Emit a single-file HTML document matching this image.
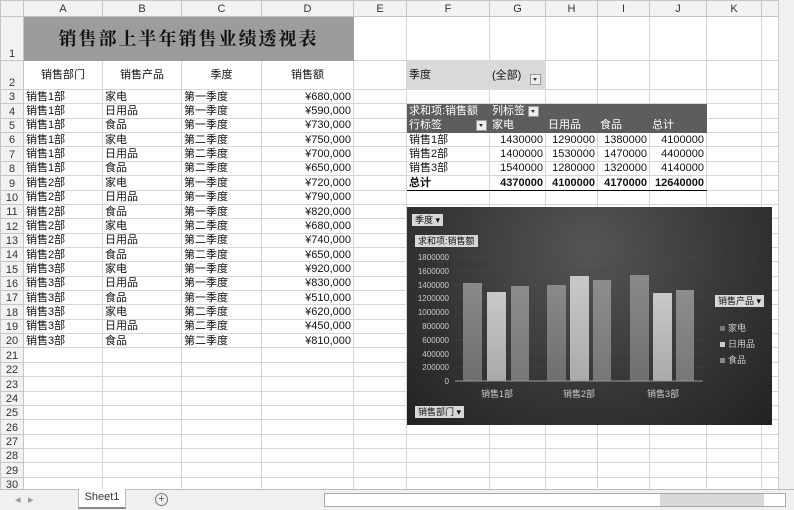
<!DOCTYPE html>
<html><head><meta charset="utf-8"><style>
body{margin:0;width:794px;height:509px;overflow:hidden;background:#fff;font-family:"Liberation Sans","Noto Sans CJK SC",sans-serif;font-size:11px;color:#111;position:relative}
table{border-collapse:collapse;table-layout:fixed;position:absolute;left:0;top:0}
tr{height:14.37px}
td{border:1px solid #d6d6d6;padding:0 2px;white-space:nowrap;overflow:hidden;line-height:12px}
tr.h td{background:#f2f2f2;color:#333;text-align:center;height:15px;border-color:#c6c6c6}
td.r{background:#f2f2f2;color:#333;text-align:center;border-color:#c6c6c6;font-size:11px;padding:0;vertical-align:bottom}
.n{text-align:right}
.dk{background:#5d5d5d;color:#fff;border-color:#5d5d5d}
.tot td.p{font-weight:bold;border-top:1px solid #000;border-bottom:1.5px solid #000}
.dd{display:inline-block;width:9px;height:9px;background:#eee;border:1px solid #999;vertical-align:middle;position:relative}
.dd:after{content:"";position:absolute;left:2px;top:3px;border:2.5px solid transparent;border-top:3px solid #333}
.chart{position:absolute;left:407px;top:207px;width:365px;height:218px;background:radial-gradient(ellipse at 50% 20%,#555 0%,#3a3a3a 50%,#222 100%)}
.btn{position:absolute;background:#d8d8d8;color:#111;font-size:9px;padding:0 3px;height:12px;line-height:12px}
</style></head><body>
<table>
<colgroup><col style="width:23px"><col style="width:79px"><col style="width:79px"><col style="width:80px"><col style="width:92px"><col style="width:53px"><col style="width:83px"><col style="width:56px"><col style="width:52px"><col style="width:52px"><col style="width:57px"><col style="width:55px"><col style="width:17px"></colgroup>
<tr class="h" style="height:16px"><td></td><td>A</td><td>B</td><td>C</td><td>D</td><td>E</td><td>F</td><td>G</td><td>H</td><td>I</td><td>J</td><td>K</td><td></td></tr>
<tr style="height:44px"><td class="r">1</td><td colspan="4" style="background:#9c9c9c;text-align:center;font-family:'Noto Serif CJK SC',serif;font-weight:bold;font-size:18px;letter-spacing:2px;line-height:43px;border-color:#9c9c9c">销售部上半年销售业绩透视表</td><td></td><td></td><td></td><td></td><td></td><td></td><td></td><td></td></tr>
<tr style="height:29px"><td class="r">2</td><td style="text-align:center">销售部门</td><td style="text-align:center">销售产品</td><td style="text-align:center">季度</td><td style="text-align:center">销售额</td><td></td><td style="background:#d9d9d9;border-color:#d9d9d9">季度</td><td style="background:#d9d9d9;border-color:#d9d9d9">(全部) <span class="dd" style="margin-left:6px;margin-top:8px"></span></td><td></td><td></td><td></td><td></td><td></td></tr>
<tr><td class="r">3</td><td>销售1部</td><td>家电</td><td>第一季度</td><td class="n">¥680,000</td><td></td><td></td><td></td><td></td><td></td><td></td><td></td><td></td></tr>
<tr><td class="r">4</td><td>销售1部</td><td>日用品</td><td>第一季度</td><td class="n">¥590,000</td><td></td><td class="dk">求和项:销售额</td><td class="dk">列标签 <span class="dd"></span></td><td class="dk"></td><td class="dk"></td><td class="dk"></td><td></td><td></td></tr>
<tr><td class="r">5</td><td>销售1部</td><td>食品</td><td>第一季度</td><td class="n">¥730,000</td><td></td><td class="dk">行标签<span class="dd" style="float:right;margin-top:1px"></span></td><td class="dk">家电</td><td class="dk">日用品</td><td class="dk">食品</td><td class="dk">总计</td><td></td><td></td></tr>
<tr><td class="r">6</td><td>销售1部</td><td>家电</td><td>第二季度</td><td class="n">¥750,000</td><td></td><td>销售1部</td><td class="n">1430000</td><td class="n">1290000</td><td class="n">1380000</td><td class="n">4100000</td><td></td><td></td></tr>
<tr><td class="r">7</td><td>销售1部</td><td>日用品</td><td>第二季度</td><td class="n">¥700,000</td><td></td><td>销售2部</td><td class="n">1400000</td><td class="n">1530000</td><td class="n">1470000</td><td class="n">4400000</td><td></td><td></td></tr>
<tr><td class="r">8</td><td>销售1部</td><td>食品</td><td>第二季度</td><td class="n">¥650,000</td><td></td><td>销售3部</td><td class="n">1540000</td><td class="n">1280000</td><td class="n">1320000</td><td class="n">4140000</td><td></td><td></td></tr>
<tr class="tot"><td class="r">9</td><td>销售2部</td><td>家电</td><td>第一季度</td><td class="n">¥720,000</td><td></td><td class="p">总计</td><td class="n p">4370000</td><td class="n p">4100000</td><td class="n p">4170000</td><td class="n p">12640000</td><td></td><td></td></tr>
<tr><td class="r">10</td><td>销售2部</td><td>日用品</td><td>第一季度</td><td class="n">¥790,000</td><td></td><td></td><td></td><td></td><td></td><td></td><td></td><td></td></tr>
<tr><td class="r">11</td><td>销售2部</td><td>食品</td><td>第一季度</td><td class="n">¥820,000</td><td></td><td></td><td></td><td></td><td></td><td></td><td></td><td></td></tr>
<tr><td class="r">12</td><td>销售2部</td><td>家电</td><td>第二季度</td><td class="n">¥680,000</td><td></td><td></td><td></td><td></td><td></td><td></td><td></td><td></td></tr>
<tr><td class="r">13</td><td>销售2部</td><td>日用品</td><td>第二季度</td><td class="n">¥740,000</td><td></td><td></td><td></td><td></td><td></td><td></td><td></td><td></td></tr>
<tr><td class="r">14</td><td>销售2部</td><td>食品</td><td>第二季度</td><td class="n">¥650,000</td><td></td><td></td><td></td><td></td><td></td><td></td><td></td><td></td></tr>
<tr><td class="r">15</td><td>销售3部</td><td>家电</td><td>第一季度</td><td class="n">¥920,000</td><td></td><td></td><td></td><td></td><td></td><td></td><td></td><td></td></tr>
<tr><td class="r">16</td><td>销售3部</td><td>日用品</td><td>第一季度</td><td class="n">¥830,000</td><td></td><td></td><td></td><td></td><td></td><td></td><td></td><td></td></tr>
<tr><td class="r">17</td><td>销售3部</td><td>食品</td><td>第一季度</td><td class="n">¥510,000</td><td></td><td></td><td></td><td></td><td></td><td></td><td></td><td></td></tr>
<tr><td class="r">18</td><td>销售3部</td><td>家电</td><td>第二季度</td><td class="n">¥620,000</td><td></td><td></td><td></td><td></td><td></td><td></td><td></td><td></td></tr>
<tr><td class="r">19</td><td>销售3部</td><td>日用品</td><td>第二季度</td><td class="n">¥450,000</td><td></td><td></td><td></td><td></td><td></td><td></td><td></td><td></td></tr>
<tr><td class="r">20</td><td>销售3部</td><td>食品</td><td>第二季度</td><td class="n">¥810,000</td><td></td><td></td><td></td><td></td><td></td><td></td><td></td><td></td></tr>
<tr><td class="r">21</td><td></td><td></td><td></td><td></td><td></td><td></td><td></td><td></td><td></td><td></td><td></td><td></td></tr>
<tr><td class="r">22</td><td></td><td></td><td></td><td></td><td></td><td></td><td></td><td></td><td></td><td></td><td></td><td></td></tr>
<tr><td class="r">23</td><td></td><td></td><td></td><td></td><td></td><td></td><td></td><td></td><td></td><td></td><td></td><td></td></tr>
<tr><td class="r">24</td><td></td><td></td><td></td><td></td><td></td><td></td><td></td><td></td><td></td><td></td><td></td><td></td></tr>
<tr><td class="r">25</td><td></td><td></td><td></td><td></td><td></td><td></td><td></td><td></td><td></td><td></td><td></td><td></td></tr>
<tr><td class="r">26</td><td></td><td></td><td></td><td></td><td></td><td></td><td></td><td></td><td></td><td></td><td></td><td></td></tr>
<tr><td class="r">27</td><td></td><td></td><td></td><td></td><td></td><td></td><td></td><td></td><td></td><td></td><td></td><td></td></tr>
<tr><td class="r">28</td><td></td><td></td><td></td><td></td><td></td><td></td><td></td><td></td><td></td><td></td><td></td><td></td></tr>
<tr><td class="r">29</td><td></td><td></td><td></td><td></td><td></td><td></td><td></td><td></td><td></td><td></td><td></td><td></td></tr>
<tr><td class="r">30</td><td></td><td></td><td></td><td></td><td></td><td></td><td></td><td></td><td></td><td></td><td></td><td></td></tr>
</table>

<div class="chart">
<svg width="365" height="218" style="position:absolute;left:0;top:0" font-family="Liberation Sans,Noto Sans CJK SC,sans-serif" font-size="8" fill="#ccc">
<defs>
<linearGradient id="a" x1="0" y1="0" x2="0" y2="1"><stop offset="0" stop-color="#8a8a8a"/><stop offset="1" stop-color="#6e6e6e"/></linearGradient>
<linearGradient id="b" x1="0" y1="0" x2="0" y2="1"><stop offset="0" stop-color="#c8c8c8"/><stop offset="1" stop-color="#aaa"/></linearGradient>
<linearGradient id="c" x1="0" y1="0" x2="0" y2="1"><stop offset="0" stop-color="#8d8d8d"/><stop offset="1" stop-color="#777"/></linearGradient>
</defs>
<g stroke="#4a4a4a" stroke-width="0.6">
<line x1="48" x2="296" y1="50" y2="50"/><line x1="48" x2="296" y1="64" y2="64"/><line x1="48" x2="296" y1="78" y2="78"/><line x1="48" x2="296" y1="91" y2="91"/><line x1="48" x2="296" y1="105" y2="105"/><line x1="48" x2="296" y1="119" y2="119"/><line x1="48" x2="296" y1="133" y2="133"/><line x1="48" x2="296" y1="147" y2="147"/><line x1="48" x2="296" y1="160" y2="160"/>
</g>
<g text-anchor="end"><text x="42" y="53">1800000</text><text x="42" y="67">1600000</text><text x="42" y="81">1400000</text><text x="42" y="94">1200000</text><text x="42" y="108">1000000</text><text x="42" y="122">800000</text><text x="42" y="136">600000</text><text x="42" y="150">400000</text><text x="42" y="163">200000</text><text x="42" y="177">0</text></g>
<rect x="56" y="76" width="19" height="98" fill="url(#a)"/><rect x="80" y="85" width="19" height="89" fill="url(#b)"/><rect x="104" y="79" width="18" height="95" fill="url(#c)"/>
<rect x="140" y="78" width="19" height="96" fill="url(#a)"/><rect x="163" y="69" width="19" height="105" fill="url(#b)"/><rect x="186" y="73" width="18" height="101" fill="url(#c)"/>
<rect x="223" y="68" width="19" height="106" fill="url(#a)"/><rect x="246" y="86" width="19" height="88" fill="url(#b)"/><rect x="269" y="83" width="18" height="91" fill="url(#c)"/>
<line x1="48" x2="296" y1="174" y2="174" stroke="#999"/>
<g text-anchor="middle" font-size="9"><text x="90" y="190">销售1部</text><text x="172" y="190">销售2部</text><text x="256" y="190">销售3部</text></g>
<g font-size="9"><rect x="313" y="119" width="5" height="5" fill="#7a7a7a"/><text x="321" y="124">家电</text><rect x="313" y="135" width="5" height="5" fill="#ccc"/><text x="321" y="140">日用品</text><rect x="313" y="151" width="5" height="5" fill="#888"/><text x="321" y="156">食品</text></g>
</svg>
<div class="btn" style="left:5px;top:7px">季度 ▾</div>
<div class="btn" style="left:8px;top:28px">求和项:销售额</div>
<div class="btn" style="left:308px;top:88px">销售产品 ▾</div>
<div class="btn" style="left:8px;top:199px">销售部门 ▾</div>
</div>

<div style="position:absolute;left:778px;top:0;width:16px;height:489px;background:#f0f0f0;border-left:1px solid #ccc"></div>
<div style="position:absolute;left:0;top:489px;width:794px;height:20px;background:#f0f0f0;border-top:1px solid #bbb;color:#999">
<span style="position:absolute;left:15px;top:3px">◂</span><span style="position:absolute;left:28px;top:3px">▸</span>
<div style="position:absolute;left:78px;top:-1px;width:46px;height:18px;background:#fff;border:1px solid #bbb;border-top:none;border-bottom:2px solid #888;text-align:center;line-height:17px;color:#333">Sheet1</div>
<div style="position:absolute;left:155px;top:3px;width:11px;height:11px;border:1px solid #777;border-radius:50%;text-align:center;line-height:11px;color:#555;font-size:11px">+</div>
<div style="position:absolute;left:324px;top:3px;width:460px;height:12px;background:#fff;border:1px solid #aaa"></div>
<div style="position:absolute;left:660px;top:4px;width:104px;height:12px;background:#d8d8d8"></div>
</div>
</body></html>
